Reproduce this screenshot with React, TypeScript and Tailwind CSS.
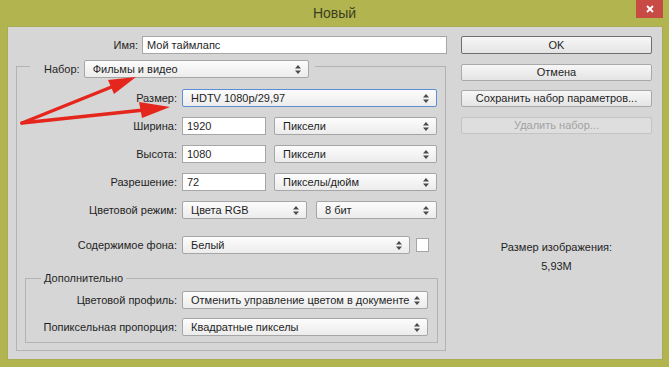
import clsx from 'clsx'

// ------------------------------------------------------------
// Small controls
// ------------------------------------------------------------

function Arrows() {
  return (
    <svg width="6" height="9" viewBox="0 0 6 9" className="shrink-0">
      <path d="M3 0 L6 3.5 L0 3.5 Z" fill="#4a4a4a" />
      <path d="M0 5.5 L6 5.5 L3 9 Z" fill="#4a4a4a" />
    </svg>
  )
}

function Select({
  value,
  className,
  focused = false,
}: {
  value: string
  className?: string
  focused?: boolean
}) {
  return (
    <div
      className={clsx(
        'h-[18px] shrink-0 flex items-center justify-between rounded-[2px] border pl-[8px] pr-[7px] bg-gradient-to-b from-[#fcfcfc] to-[#ececec] whitespace-nowrap',
        focused ? 'border-[#5b8ed6]' : 'border-[#a6a6a6]',
        className,
      )}
    >
      <span>{value}</span>
      <Arrows />
    </div>
  )
}

function Input({ value, className }: { value: string; className?: string }) {
  return (
    <div
      className={clsx(
        'h-[18px] shrink-0 flex items-center border border-[#a6a6a6] bg-white pl-[4px]',
        className,
      )}
    >
      {value}
    </div>
  )
}

function Row({
  label,
  labelW,
  children,
}: {
  label: string
  labelW: string
  children: React.ReactNode
}) {
  return (
    <div className="flex items-center gap-[5px]">
      <div className={clsx('text-right whitespace-nowrap shrink-0', labelW)}>{label}</div>
      {children}
    </div>
  )
}

function Button({
  label,
  isDefault = false,
  disabled = false,
}: {
  label: string
  isDefault?: boolean
  disabled?: boolean
}) {
  return (
    <div
      className={clsx(
        'flex items-center justify-center rounded-[2px] border',
        isDefault ? 'h-[18px] border-[#6e6e6e]' : 'h-[17px]',
        disabled
          ? 'border-[#c4c4c4] bg-[#dedede] text-[#a2a2a2]'
          : 'bg-gradient-to-b from-[#f7f7f7] to-[#e4e4e4]',
        !disabled && !isDefault && 'border-[#a9a9a9]',
      )}
    >
      {label}
    </div>
  )
}

// ------------------------------------------------------------
// Red arrows drawn over the screenshot
// ------------------------------------------------------------

function Annotations() {
  return (
    <svg
      className="absolute inset-0 pointer-events-none"
      width="669"
      height="367"
      viewBox="0 0 669 367"
    >
      <g stroke="#e5261c" strokeWidth="3.5" strokeLinecap="round" fill="none">
        <line x1="22" y1="123" x2="114" y2="86" />
        <line x1="22" y1="123" x2="144" y2="110" />
      </g>
      <polygon points="136,77 108,80 114,94" fill="#e5261c" />
      <polygon points="170,107 139,102 142,118" fill="#e5261c" />
    </svg>
  )
}

// ------------------------------------------------------------
// Dialog
// ------------------------------------------------------------

export default function App() {
  return (
    <div
      className="relative w-[669px] h-[367px] overflow-hidden bg-[#b2b54f] flex flex-col text-[11px] text-[#1f1f1f]"
      style={{ fontFamily: '"Liberation Sans", Arial, sans-serif' }}
    >
      {/* Title bar */}
      <div className="relative h-[26px] shrink-0 flex items-center justify-center">
        <span className="text-[14px] text-[#3b3d22]">Новый</span>
        <div className="absolute right-[6px] top-0 w-[27px] h-[18px] bg-[#c84a45] flex items-center justify-center">
          <svg width="8" height="8" viewBox="0 0 8 8">
            <path d="M1 1 L7 7 M7 1 L1 7" stroke="white" strokeWidth="1.8" />
          </svg>
        </div>
      </div>

      {/* Body */}
      <div className="ml-[7px] mr-[6px] mb-[7px] flex-1 bg-[#d6d6d6] border border-[#a9ac52] flex pl-[8px] pt-[9px] gap-[13px]">
        {/* Left column */}
        <div className="w-[432px] flex flex-col">
          <div className="flex items-center gap-[4px]">
            <div className="w-[122px] text-right">Имя:</div>
            <Input value="Мой таймлапс" className="w-[305px]" />
          </div>

          <fieldset className="mt-[6px] w-[430px] border border-[#b3b3b3] pl-[8px] pr-[7px] pb-[7px]">
            <legend className="ml-[5px] h-[13px] pl-[14px] pr-[6px]">
              <div className="flex items-center gap-[4px]">
                <span>Набор:</span>
                <Select value="Фильмы и видео" className="w-[225px]" />
              </div>
            </legend>

            <div className="pt-[16px] flex flex-col gap-[10px]">
              <Row label="Размер:" labelW="w-[152px]">
                <Select value="HDTV 1080p/29,97" className="w-[255px]" focused />
              </Row>
              <Row label="Ширина:" labelW="w-[152px]">
                <Input value="1920" className="w-[84px]" />
                <Select value="Пиксели" className="ml-[3px] w-[163px]" />
              </Row>
              <Row label="Высота:" labelW="w-[152px]">
                <Input value="1080" className="w-[84px]" />
                <Select value="Пиксели" className="ml-[3px] w-[163px]" />
              </Row>
              <Row label="Разрешение:" labelW="w-[152px]">
                <Input value="72" className="w-[84px]" />
                <Select value="Пикселы/дюйм" className="ml-[3px] w-[163px]" />
              </Row>
              <Row label="Цветовой режим:" labelW="w-[152px]">
                <Select value="Цвета RGB" className="w-[125px]" />
                <Select value="8 бит" className="ml-[4px] w-[121px]" />
              </Row>
              <div className="mt-[7px]">
                <Row label="Содержимое фона:" labelW="w-[152px]">
                  <Select value="Белый" className="w-[228px]" />
                  <div className="ml-[1px] w-[13px] h-[14px] bg-white border border-[#a6a6a6]" />
                </Row>
              </div>
            </div>

            <fieldset className="mt-[17px] border border-[#b3b3b3] pb-[6px]">
              <legend className="ml-[15px] px-[3px] h-[14px] leading-[14px]">Дополнительно</legend>
              <div className="pt-[6px] flex flex-col gap-[9px]">
                <Row label="Цветовой профиль:" labelW="w-[151px]">
                  <Select value="Отменить управление цветом в документе" className="w-[246px]" />
                </Row>
                <Row label="Попиксельная пропорция:" labelW="w-[151px]">
                  <Select value="Квадратные пикселы" className="w-[246px]" />
                </Row>
              </div>
            </fieldset>
          </fieldset>
        </div>

        {/* Right column */}
        <div className="w-[191px] flex flex-col">
          <Button label="OK" isDefault />
          <div className="mt-[10px]">
            <Button label="Отмена" />
          </div>
          <div className="mt-[9px]">
            <Button label="Сохранить набор параметров..." />
          </div>
          <div className="mt-[10px]">
            <Button label="Удалить набор..." disabled />
          </div>
          <div className="mt-[106px] flex flex-col items-center gap-[5px] leading-[14px]">
            <span>Размер изображения:</span>
            <span>5,93M</span>
          </div>
        </div>
      </div>

      <Annotations />
    </div>
  )
}
